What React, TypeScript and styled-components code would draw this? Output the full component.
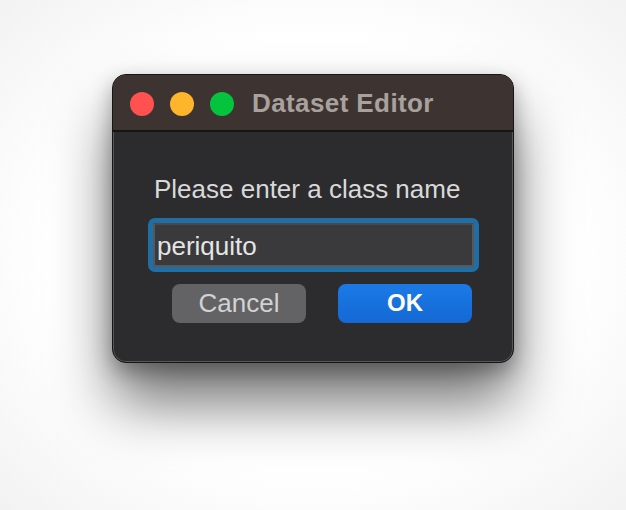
import React from "react";
import styled, { createGlobalStyle } from "styled-components";

const Global = createGlobalStyle`
  html, body { margin: 0; padding: 0; background: #ffffff; }
  body { font-family: "Liberation Sans", Arial, sans-serif; }
`;

const Page = styled.div`
  width: 626px;
  height: 510px;
  box-sizing: border-box;
  padding: 74px 0 0 112px;
  background: radial-gradient(ellipse at center, #ffffff 60%, #f2f2f2 100%);
  overflow: hidden;
`;

const Window = styled.div`
  width: 402px;
  height: 289px;
  box-sizing: border-box;
  border-radius: 14px;
  border: 1px solid #161616;
  box-shadow: inset 0 0 0 1px #5a5655, 0 40px 60px rgba(0, 0, 0, 0.55), 0 8px 20px rgba(0, 0, 0, 0.3);
  background: #2c2c2e;
  overflow: hidden;
  display: flex;
  flex-direction: column;
`;

const TitleBar = styled.div`
  height: 57px;
  flex: none;
  background: #3d3431;
  border-bottom: 2px solid #151515;
  display: flex;
  align-items: center;
  padding-left: 17px;
  gap: 16px;
  box-sizing: border-box;
  padding-top: 2px;
`;

const Lights = styled.div`
  display: flex;
  gap: 16px;
`;

const Light = styled.span<{ $c: string }>`
  width: 24px;
  height: 24px;
  border-radius: 50%;
  background: ${(p) => p.$c};
  display: block;
`;

const Title = styled.div`
  color: #a9a19d;
  font-weight: bold;
  font-size: 26px;
  letter-spacing: 0.4px;
  margin-left: 2px;
`;

const Body = styled.div`
  display: flex;
  flex-direction: column;
  align-items: flex-start;
  padding: 43px 0 0 35px;
`;

const Label = styled.div`
  color: #d9d9d9;
  font-size: 26px;
  margin-left: 6px;
  line-height: 28px;
`;

const Field = styled.div`
  margin-top: 15px;
  width: 331px;
  height: 54px;
  box-sizing: border-box;
  border-radius: 7px;
  border: 4px solid #1f6ea6;
  padding: 1px;
  background: #1f6ea6;
  display: flex;
`;

const Input = styled.div`
  flex: 1;
  background: #3a3a3c;
  border: 2px solid #58585a;
  border-top-color: #4a4a4c;
  display: flex;
  align-items: center;
  color: #e4e4e4;
  font-size: 26px;
  padding-left: 2px;
  padding-top: 2px;
`;

const Buttons = styled.div`
  display: flex;
  gap: 32px;
  margin-top: 12px;
  margin-left: 24px;
`;

const Button = styled.div<{ $primary?: boolean }>`
  width: 134px;
  height: 39px;
  border-radius: 8px;
  display: flex;
  align-items: center;
  justify-content: center;
  font-size: ${(p) => (p.$primary ? "24px" : "26px")};
  color: ${(p) => (p.$primary ? "#ffffff" : "#d2d2d2")};
  font-weight: ${(p) => (p.$primary ? "bold" : "normal")};
  background: ${(p) => (p.$primary ? "linear-gradient(#1b7ae6, #1468d4)" : "#636365")};
  padding-bottom: 1px;
  box-sizing: border-box;
`;

export default function App() {
  return (
    <>
      <Global />
      <Page>
        <Window>
          <TitleBar>
            <Lights>
              <Light $c="#fe5150" />
              <Light $c="#feb52c" />
              <Light $c="#04c33c" />
            </Lights>
            <Title>Dataset Editor</Title>
          </TitleBar>
          <Body>
            <Label>Please enter a class name</Label>
            <Field>
              <Input>periquito</Input>
            </Field>
            <Buttons>
              <Button>Cancel</Button>
              <Button $primary>OK</Button>
            </Buttons>
          </Body>
        </Window>
      </Page>
    </>
  );
}
